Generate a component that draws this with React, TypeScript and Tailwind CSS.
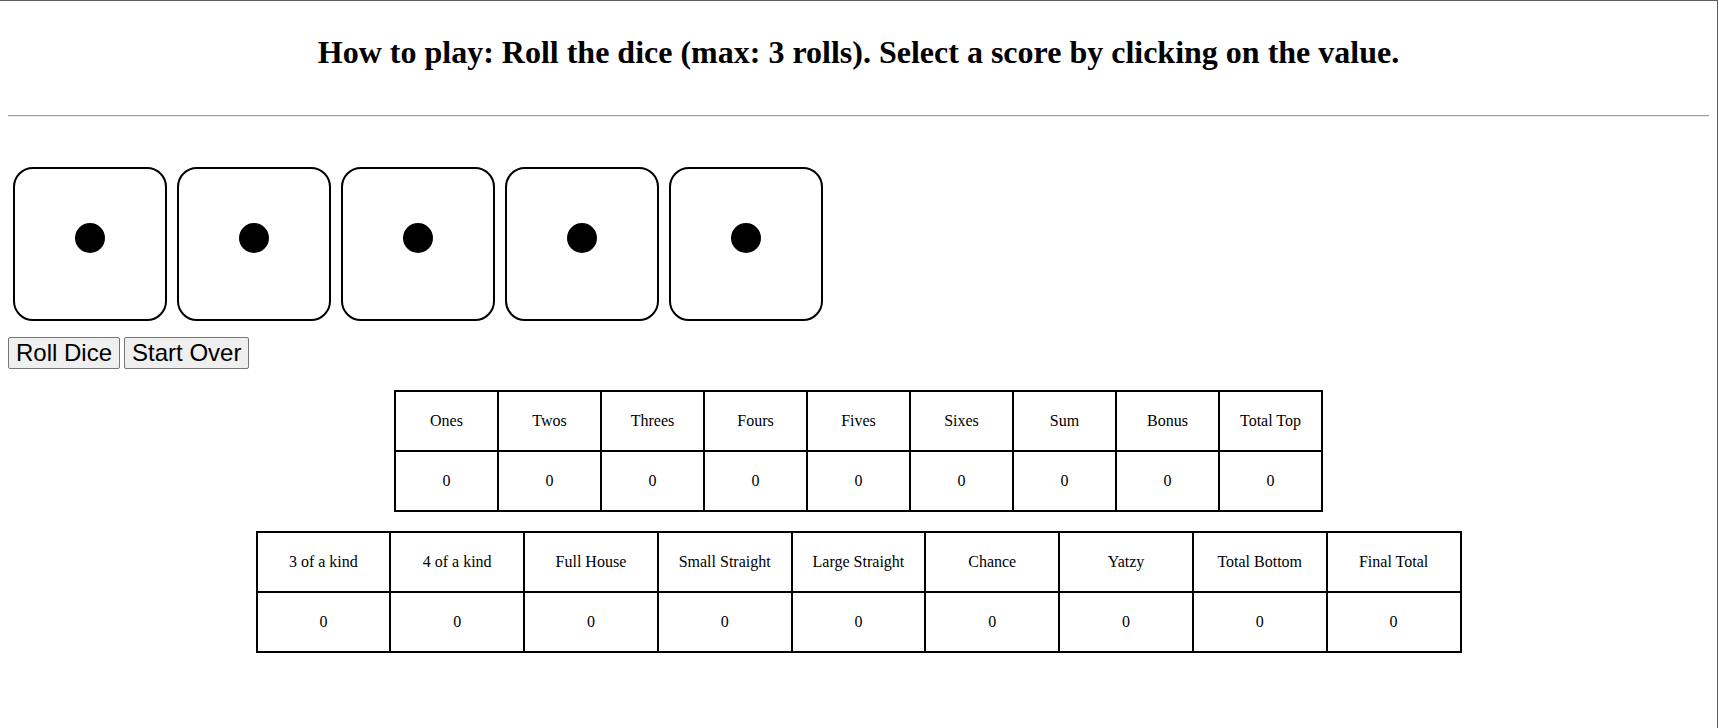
import React, { useState } from 'react';

const topCats = ['Ones', 'Twos', 'Threes', 'Fours', 'Fives', 'Sixes', 'Sum', 'Bonus', 'Total Top'];
const bottomCats = ['3 of a kind', '4 of a kind', 'Full House', 'Small Straight', 'Large Straight', 'Chance', 'Yatzy', 'Total Bottom', 'Final Total'];

const Die: React.FC = () => (
    <div className="w-[154px] h-[154px] border-2 border-black rounded-[20px] bg-white">
        <div className="ml-[60px] mt-[54px] w-[30px] h-[30px] rounded-full bg-black"></div>
    </div>
);

const ScoreTable: React.FC<{ cats: string[]; width: string }> = ({ cats, width }) => (
    <table className={`mx-auto border-collapse table-fixed ${width}`}>
        <tbody>
            <tr>
                {cats.map((c) => (
                    <td key={c} className="border-2 border-black h-[60px] text-center align-middle text-[16px] leading-[18px]">
                        {c}
                    </td>
                ))}
            </tr>
            <tr>
                {cats.map((c) => (
                    <td key={c} className="border-2 border-black h-[60px] text-center align-middle text-[16px] leading-[18px] cursor-pointer">
                        0
                    </td>
                ))}
            </tr>
        </tbody>
    </table>
);

const App: React.FC = () => {
    const [rolls, setRolls] = useState(0);

    return (
        <div className="min-h-screen w-[1718px] border-t border-r border-[#5c5c5c] bg-white text-black font-['Liberation_Serif','Times_New_Roman',serif]">
            <div className="px-2">
                <h1 className="pt-[33px] text-center text-[32px] leading-[37px] font-bold">
                    How to play: Roll the dice (max: 3 rolls). Select a score by clicking on the value.
                </h1>

                <div className="mt-[44px] border-t border-b border-t-[#9a9a9a] border-b-[#eeeeee]"></div>

                {/* Dice */}
                <div className="mt-[50px] flex gap-[10px] pl-[5px]">
                    {[0, 1, 2, 3, 4].map((i) => (
                        <Die key={i} />
                    ))}
                </div>

                <div className="mt-[16px] flex gap-[4px] font-['Liberation_Sans',Arial,sans-serif] text-[24px] leading-[28px]">
                    <button
                        onClick={() => setRolls(Math.min(rolls + 1, 3))}
                        className="bg-[#efefef] border border-[#767676] rounded-[2px] px-[7px] py-[1px] text-black"
                    >
                        Roll Dice
                    </button>
                    <button
                        onClick={() => setRolls(0)}
                        className="bg-[#efefef] border border-[#767676] rounded-[2px] px-[7px] py-[1px] text-black"
                    >
                        Start Over
                    </button>
                </div>

                <div className="mt-[21px]">
                    <ScoreTable cats={topCats} width="w-[929px]" />
                </div>
                <div className="mt-[19px]">
                    <ScoreTable cats={bottomCats} width="w-[1206px]" />
                </div>
            </div>
        </div>
    );
};

export default App;
